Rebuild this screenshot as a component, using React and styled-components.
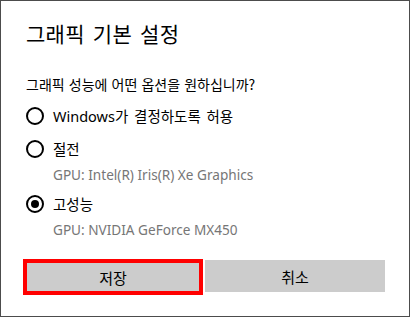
import { useState } from "react";
import styled, { createGlobalStyle } from "styled-components";

const Global = createGlobalStyle`
  html, body {
    margin: 0;
    padding: 0;
    background: #ffffff;
  }
  body {
    font-family: "Noto Sans", "Noto Sans CJK KR", sans-serif;
  }
`;

const Dialog = styled.div`
  width: 410px;
  height: 317px;
  box-sizing: border-box;
  border: 1px solid #4c4c4c;
  background: #ffffff;
  padding: 18px 24px 0 25px;
  display: flex;
  flex-direction: column;
  color: #000000;
`;

const Title = styled.h1`
  margin: 0;
  font-family: "Noto Sans CJK KR", sans-serif;
  font-weight: 400;
  font-size: 21px;
  line-height: 28px;
  word-spacing: 3px;
  letter-spacing: 0.3px;
`;

const Question = styled.p`
  margin: 27px 0 0;
  font-family: "Noto Sans CJK KR", sans-serif;
  font-size: 14px;
  line-height: 20px;
  word-spacing: 1px;
`;

const Options = styled.div`
  margin-top: 12px;
  display: flex;
  flex-direction: column;
`;

const Option = styled.label`
  display: flex;
  align-items: center;
  gap: 9px;
  height: 20px;
  margin-top: ${(p) => p.$gap}px;
  font-size: 14.5px;
  line-height: 20px;
  cursor: pointer;
`;

const Circle = styled.span`
  width: 18px;
  height: 18px;
  box-sizing: border-box;
  border: 2px solid #000000;
  border-radius: 50%;
  display: flex;
  align-items: center;
  justify-content: center;
  flex: none;

  &::after {
    content: "";
    width: 8px;
    height: 8px;
    border-radius: 50%;
    background: #000000;
    display: ${(p) => (p.$on ? "block" : "none")};
  }
`;

const Label = styled.span`
  font-family: "Noto Sans", "Noto Sans CJK KR", sans-serif;
  word-spacing: 2px;
`;

const Sub = styled.div`
  margin: 6px 0 0 27px;
  font-size: 13.6px;
  line-height: 20px;
  color: #767676;
`;

const Buttons = styled.div`
  margin-top: auto;
  margin-bottom: 21px;
  margin-left: -3px;
  display: flex;
  align-items: flex-start;
  gap: 2px;
`;

const Button = styled.button`
  width: 180px;
  height: ${(p) => (p.$focus ? 36 : 32)}px;
  margin-top: ${(p) => (p.$focus ? 0 : 1)}px;
  box-sizing: border-box;
  border: ${(p) => (p.$focus ? "4px solid #ff0000" : "none")};
  background: #cccccc;
  font-family: "Noto Sans CJK KR", sans-serif;
  font-size: 15px;
  color: #000000;
  padding: 0;
`;

const options = [
  { id: "auto", label: "Windows가 결정하도록 허용", gap: 0 },
  { id: "save", label: "절전", gpu: "GPU: Intel(R) Iris(R) Xe Graphics", gap: 13 },
  { id: "high", label: "고성능", gpu: "GPU: NVIDIA GeForce MX450", gap: 9 },
];

export default function App() {
  const [choice, setChoice] = useState("high");

  return (
    <>
      <Global />
      <Dialog>
        <Title>그래픽 기본 설정</Title>
        <Question>그래픽 성능에 어떤 옵션을 원하십니까?</Question>
        <Options>
          {options.map((o) => (
            <div key={o.id}>
              <Option $gap={o.gap} onClick={() => setChoice(o.id)}>
                <Circle $on={choice === o.id} />
                <Label>{o.label}</Label>
              </Option>
              {o.gpu && <Sub>{o.gpu}</Sub>}
            </div>
          ))}
        </Options>
        <Buttons>
          <Button $focus>저장</Button>
          <Button>취소</Button>
        </Buttons>
      </Dialog>
    </>
  );
}
